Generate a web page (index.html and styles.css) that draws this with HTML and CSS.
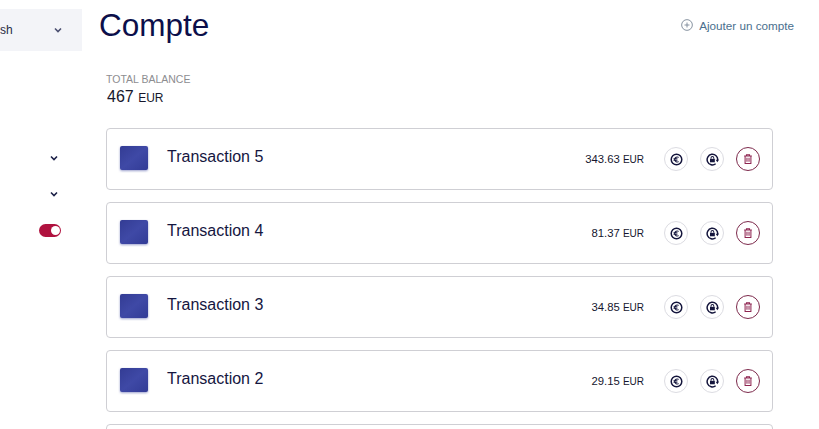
FILE: index.html
```html
<!DOCTYPE html>
<html lang="en">

<head>
    <meta charset="UTF-8">
    <meta name="viewport" content="width=device-width, initial-scale=1.0">
    <title>Compte</title>
    <link rel="stylesheet" href="styles.css">
</head>

<body>
    <svg class="defs" width="0" height="0">
        <defs>
            <linearGradient id="thumb-shade" x1="0" y1="0" x2="1" y2="1">
                <stop offset="0" stop-color="#333c94" />
                <stop offset="0.5" stop-color="#3f49a6" />
                <stop offset="1" stop-color="#323b96" />
            </linearGradient>
        </defs>
        <symbol id="chev" viewBox="0 0 8 6">
            <path d="M1 1.5l3 3 3-3" fill="none" stroke="currentColor" stroke-width="1.6" />
        </symbol>
        <symbol id="euro" viewBox="0 0 14 14">
            <circle cx="7" cy="7" r="5.7" fill="none" stroke="currentColor" stroke-width="1.6" />
            <path d="M9.4 4.7A2.9 2.9 0 0 0 5 7a2.9 2.9 0 0 0 4.4 2.3M3.8 6.2h4.2M3.8 7.8h4.2" fill="none" stroke="currentColor" stroke-width="1.1" />
        </symbol>
        <symbol id="lock" viewBox="0 0 14 14">
            <path d="M12.6 7.6A5.7 5.7 0 1 0 10.4 11.6" fill="none" stroke="currentColor" stroke-width="1.6" />
            <path d="M10.4 7.4h3.6l-1.8 2.6z" fill="currentColor" />
            <rect x="4.3" y="6.3" width="5.2" height="3.7" fill="currentColor" />
            <path d="M5.4 6.3V5.3a1.5 1.5 0 0 1 3 0v1" fill="none" stroke="currentColor" stroke-width="1.1" />
        </symbol>
        <symbol id="trash" viewBox="0 0 14 14">
            <path d="M2.5 3.5h9M5.2 3.3V2h3.6v1.3M3.6 3.5v8.7h6.8V3.5M5.8 5.5v4.8M8.2 5.5v4.8" fill="none" stroke="currentColor" stroke-width="1.2" />
        </symbol>
    </svg>

    <div class="page">
        <div class="sidebar">
            <div class="lang">
                <span>sh</span>
                <svg class="chev"><use href="#chev" /></svg>
            </div>
            <div class="side-row first"><svg class="chev"><use href="#chev" /></svg></div>
            <div class="side-row"><svg class="chev"><use href="#chev" /></svg></div>
            <div class="side-row toggle-row"><span class="toggle"></span></div>
        </div>

        <div class="content">
            <div class="navbar">
                <h1>Compte</h1>
                <a class="add-link" href="#">
                    <svg width="12" height="12" viewBox="0 0 13 13">
                        <circle cx="6.5" cy="6.5" r="5.8" fill="none" stroke="#7d8a99" />
                        <path d="M6.5 3.8v5.4M3.8 6.5h5.4" stroke="#7d8a99" />
                    </svg>
                    Ajouter un compte
                </a>
            </div>

            <div class="balance">
                <p class="balance-label">TOTAL BALANCE</p>
                <p class="balance-value">467 <small>EUR</small></p>
            </div>

            <div class="list">
                <div class="item">
                    <svg class="thumb" viewBox="0 0 28 24"><rect width="28" height="24" rx="2" fill="url(#thumb-shade)" /></svg>
                    <h3>Transaction 5</h3>
                    <p class="amount">343.63 <small>EUR</small></p>
                    <button class="round"><svg><use href="#euro" /></svg></button>
                    <button class="round"><svg><use href="#lock" /></svg></button>
                    <button class="round danger"><svg><use href="#trash" /></svg></button>
                </div>
                <div class="item">
                    <svg class="thumb" viewBox="0 0 28 24"><rect width="28" height="24" rx="2" fill="url(#thumb-shade)" /></svg>
                    <h3>Transaction 4</h3>
                    <p class="amount">81.37 <small>EUR</small></p>
                    <button class="round"><svg><use href="#euro" /></svg></button>
                    <button class="round"><svg><use href="#lock" /></svg></button>
                    <button class="round danger"><svg><use href="#trash" /></svg></button>
                </div>
                <div class="item">
                    <svg class="thumb" viewBox="0 0 28 24"><rect width="28" height="24" rx="2" fill="url(#thumb-shade)" /></svg>
                    <h3>Transaction 3</h3>
                    <p class="amount">34.85 <small>EUR</small></p>
                    <button class="round"><svg><use href="#euro" /></svg></button>
                    <button class="round"><svg><use href="#lock" /></svg></button>
                    <button class="round danger"><svg><use href="#trash" /></svg></button>
                </div>
                <div class="item">
                    <svg class="thumb" viewBox="0 0 28 24"><rect width="28" height="24" rx="2" fill="url(#thumb-shade)" /></svg>
                    <h3>Transaction 2</h3>
                    <p class="amount">29.15 <small>EUR</small></p>
                    <button class="round"><svg><use href="#euro" /></svg></button>
                    <button class="round"><svg><use href="#lock" /></svg></button>
                    <button class="round danger"><svg><use href="#trash" /></svg></button>
                </div>
                <div class="item"></div>
            </div>
        </div>
    </div>
</body>

</html>
```

FILE: styles.css
```css
html,
body {
    height: 100%;
}

body {
    margin: 0;
    overflow: hidden;
    font-family: 'Liberation Sans', Arial, sans-serif;
    background-color: #ffffff;
    color: #0f1038;
}

.defs {
    display: block;
    height: 0;
}

.page {
    display: flex;
    height: 429px;
    overflow: hidden;
}

.sidebar {
    width: 82px;
    flex-shrink: 0;
    padding-top: 9px;
}

.lang {
    display: flex;
    justify-content: space-between;
    align-items: center;
    height: 42px;
    padding: 0 20px 0 0;
    background-color: #f3f4f8;
    font-size: 12px;
    color: #2a2b45;
}

.lang .chev {
    color: #4b4f70;
}

.chev {
    display: block;
    width: 8px;
    height: 6px;
    color: #1c2148;
}

.side-row {
    display: flex;
    justify-content: flex-end;
    align-items: center;
    height: 36px;
    padding-right: 24px;
}

.side-row.first {
    margin-top: 89px;
}

.side-row.toggle-row {
    padding-right: 21px;
}

.toggle {
    position: relative;
    display: block;
    width: 22px;
    height: 13px;
    border-radius: 7px;
    background-color: #b0123f;
}

.toggle::after {
    content: "";
    position: absolute;
    top: 2px;
    right: 1px;
    width: 9px;
    height: 9px;
    border-radius: 50%;
    background-color: #ffffff;
}

.content {
    flex: 1;
    padding-left: 17px;
    padding-right: 25px;
}

.navbar {
    display: flex;
    justify-content: space-between;
    align-items: center;
    height: 50px;
}

.navbar h1 {
    margin: 0;
    font-size: 31.5px;
    font-weight: 400;
    color: #0c0f4a;
}

.add-link {
    display: flex;
    align-items: center;
    gap: 6px;
    font-size: 11.7px;
    color: #4a6f8e;
    text-decoration: none;
}

.balance {
    margin: 23px 0 0 7px;
}

.balance-label {
    margin: 0;
    font-size: 10.5px;
    line-height: 12px;
    color: #8d8d90;
}

.balance-value {
    margin: 3px 0 0 1px;
    font-size: 16px;
    line-height: 18px;
    color: #17172b;
}

.balance-value small {
    font-size: 12px;
}

.list {
    display: flex;
    flex-direction: column;
    gap: 12px;
    margin: 21px 0 0 7px;
    width: 667px;
}

.item {
    display: flex;
    align-items: center;
    flex-shrink: 0;
    box-sizing: border-box;
    height: 62px;
    padding: 0 12px 0 13px;
    border: 1px solid #cfcfd4;
    border-radius: 4px;
    background-color: #ffffff;
}

.thumb {
    display: block;
    width: 28px;
    height: 24px;
    margin-top: -3px;
    filter: drop-shadow(0 1px 1px rgba(53, 63, 154, 0.5));
}

.item h3 {
    flex: 1;
    margin: -5px 0 0 19px;
    font-size: 16px;
    font-weight: 400;
    color: #15163f;
}

.amount {
    margin: 0 20px 0 0;
    font-size: 11.3px;
    color: #15162e;
}

.amount small {
    font-size: 10px;
}

.round {
    display: flex;
    justify-content: center;
    align-items: center;
    width: 24px;
    height: 24px;
    margin-left: 12px;
    padding: 0;
    border: 1px solid #dcdce2;
    border-radius: 50%;
    background-color: #ffffff;
    color: #14153c;
}

.round:first-of-type {
    margin-left: 0;
}

.round svg {
    display: block;
    width: 13px;
    height: 13px;
}

.round.danger {
    border-color: #7d2a4c;
    color: #8e2450;
}

.round.danger svg {
    width: 12px;
    height: 12px;
}
```
